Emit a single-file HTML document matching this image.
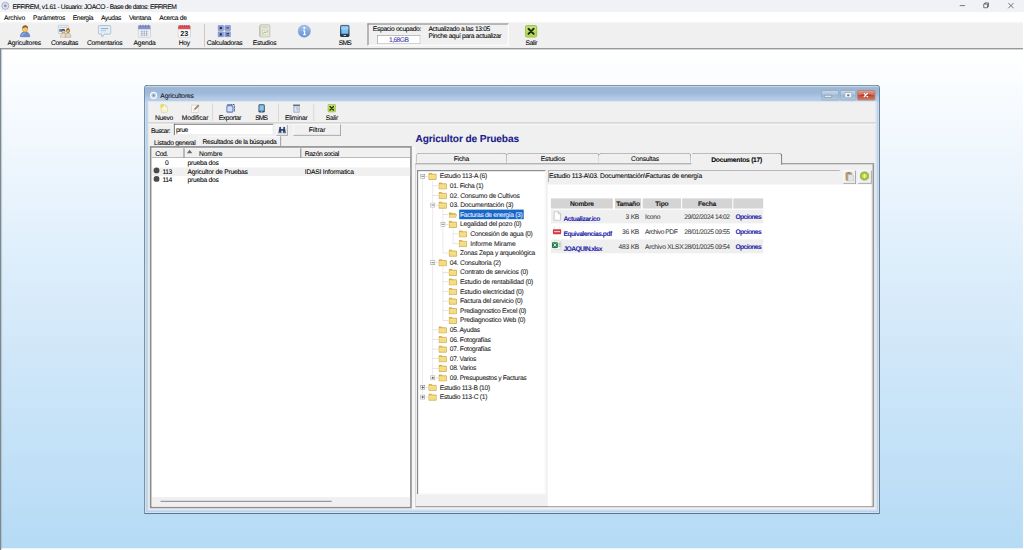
<!DOCTYPE html>
<html lang="es"><head><meta charset="utf-8"><title>EFFIREM</title>
<style>
html,body{margin:0;padding:0;width:1024px;height:550px;overflow:hidden;background:#fff}
#r{position:absolute;left:0;top:0;width:1920px;height:1032px;transform:scale(0.533333);transform-origin:0 0;text-rendering:geometricPrecision;font-family:"Liberation Sans",sans-serif;font-size:12px;overflow:hidden}
#r div,#r span.t,#r svg{position:absolute;box-sizing:border-box}
#r span.t{white-space:nowrap;line-height:16px;height:16px;-webkit-text-stroke:0.12px currentColor}
</style></head><body><div id="r">
<div style="left:0px;top:0px;width:1920px;height:23px;background:#f1f2f5"></div>
<div style="left:0px;top:23px;width:1920px;height:19px;background:#fff"></div>
<div style="left:0px;top:40.5px;width:1918px;height:50px;background:linear-gradient(#f8f8f8 0,#f0f0f0 3.5px)"></div>
<div style="left:0px;top:90px;width:1920px;height:942px;background:#fff"></div>
<div style="left:0px;top:89.8px;width:1918px;height:3.7px;background:linear-gradient(#9c9f9e,#868a89)"></div>
<div style="left:2px;top:93px;width:1916px;height:935px;background:linear-gradient(to bottom,#ffffff 0%,#e4f1fc 35%,#d8ebfa 50%,#cae4f8 70%,#b5dbf5 100%)"></div>
<div style="left:0px;top:90px;width:2px;height:942px;background:#7a8890"></div>
<div style="left:2px;top:92px;width:2px;height:938px;background:#aab4ba;opacity:.6"></div>
<svg style="left:1.7px;top:2.9px" width="16" height="16" viewBox="0 0 16 16"><circle cx="8" cy="8" r="6.6" fill="#e6e8f3" stroke="#a3a7c4" stroke-width="1.7"/><circle cx="8" cy="8" r="4" fill="none" stroke="#c9cce0" stroke-width="1"/><circle cx="8" cy="8" r="2.7" fill="#8d95b8"/></svg>
<span class="t" style="left:23.40px;top:5.00px;font-size:12.60px;letter-spacing:-0.796px;color:#000;">EFFIREM, v1.61 - Usuario: JOACO - Base de datos: EFFIREM</span>
<svg style="left:1780px;top:0" width="140" height="22" viewBox="0 0 140 22"><g stroke="#222" stroke-width="1.1" fill="none"><path d="M19.5 10.5h10"/><path d="M64.5 7.5h7v7h-7z M66.5 7.5v-2h7v7h-2"/><path d="M110.5 5.5l10 10M120.5 5.5l-10 10"/></g></svg>
<span class="t" style="left:7.50px;top:25.62px;font-size:12.60px;letter-spacing:-0.359px;color:#000;">Archivo</span>
<span class="t" style="left:62.00px;top:25.62px;font-size:12.60px;letter-spacing:-0.512px;color:#000;">Parámetros</span>
<span class="t" style="left:136.60px;top:25.62px;font-size:12.60px;letter-spacing:-0.876px;color:#000;">Energía</span>
<span class="t" style="left:189.40px;top:25.62px;font-size:12.60px;letter-spacing:-0.700px;color:#000;">Ayudas</span>
<span class="t" style="left:242.00px;top:25.62px;font-size:12.60px;letter-spacing:-0.750px;color:#000;">Ventana</span>
<span class="t" style="left:298.60px;top:25.62px;font-size:12.60px;letter-spacing:-0.592px;color:#000;">Acerca de</span>
<span class="t" style="left:14.00px;top:72.50px;font-size:12.60px;letter-spacing:-0.302px;color:#000;">Agricultores</span>
<span class="t" style="left:95.60px;top:72.50px;font-size:12.60px;letter-spacing:-0.570px;color:#000;">Consultas</span>
<span class="t" style="left:163.00px;top:72.50px;font-size:12.60px;letter-spacing:-0.430px;color:#000;">Comentarios</span>
<span class="t" style="left:250.50px;top:72.50px;font-size:12.60px;letter-spacing:-0.390px;color:#000;">Agenda</span>
<span class="t" style="left:335.00px;top:72.50px;font-size:12.60px;letter-spacing:-0.469px;color:#000;">Hoy</span>
<span class="t" style="left:387.70px;top:72.50px;font-size:12.60px;letter-spacing:-0.562px;color:#000;">Calculadoras</span>
<span class="t" style="left:474.00px;top:72.50px;font-size:12.60px;letter-spacing:-0.541px;color:#000;">Estudios</span>
<span class="t" style="left:635.00px;top:72.50px;font-size:12.60px;letter-spacing:-1.435px;color:#000;">SMS</span>
<span class="t" style="left:985.50px;top:72.50px;font-size:12.60px;letter-spacing:-0.681px;color:#000;">Salir</span>
<div style="left:383px;top:45px;width:1px;height:43px;background:#a8a8a8"></div>
<div style="left:689px;top:43.5px;width:265px;height:42.5px;border:2.2px solid;border-color:#858585 #fff #fff #858585;background:#f0f0f0"></div>
<span class="t" style="left:699.00px;top:46.25px;font-size:12.60px;letter-spacing:-0.611px;color:#000;">Espacio ocupado:</span>
<div style="left:707px;top:66px;width:81px;height:16px;background:#fff;border:1.5px solid;border-color:#858585 #b0b0b0 #b0b0b0 #858585"></div>
<span class="t" style="left:729.30px;top:66.87px;font-size:12.60px;letter-spacing:-1.055px;color:#3a3aa8;">1,68GB</span>
<span class="t" style="left:803.40px;top:46.25px;font-size:12.60px;letter-spacing:-0.650px;color:#000;">Actualizado a las 13:05</span>
<span class="t" style="left:803.40px;top:59.37px;font-size:12.60px;letter-spacing:-0.596px;color:#000;">Pinche aquí para actualizar</span>
<div style="left:269.8px;top:159.3px;width:1380.4px;height:804.8px;border-radius:7px 7px 2px 2px;background:#b9d1ea;border:2.3px solid;border-top-width:2.6px;border-color:#6f7f8e #6a8298 #4f7290 #7890a6;box-shadow:inset 0 0 0 1.6px rgba(255,255,255,.5)"></div>
<div style="left:272.1px;top:161.9px;width:1375.8px;height:28.9px;border-radius:4px 4px 0 0;background:linear-gradient(to bottom,#b4c5d6 0%,#9bb7d5 10%,#9dbad9 45%,#b1c9e7 74%,#bfcfe1 100%)"></div>
<div style="left:278px;top:190.8px;width:1364px;height:764.2px;background:#f0f0f0"></div>
<div style="left:278px;top:189.6px;width:1364px;height:2.2px;background:#e9eff7"></div>
<div style="left:276.5px;top:190px;width:1.5px;height:767px;background:#dfe9f3"></div>
<div style="left:1642px;top:190px;width:1.5px;height:767px;background:#dfe9f3"></div>
<div style="left:276.5px;top:955px;width:1367px;height:2px;background:#e8eff7"></div>
<svg style="left:279.800px;top:171.300px" width="16" height="16" viewBox="0 0 16 16"><circle cx="8" cy="8" r="5.600" fill="#b7c6da" stroke="#f4f7fb" stroke-width="2.300"/><circle cx="8" cy="8" r="1.900" fill="#7f8ca8"/></svg>
<span class="t" style="left:300.60px;top:171.87px;font-size:12.60px;letter-spacing:-0.319px;color:#10131c;">Agricultores</span>
<div style="left:1540px;top:169px;width:33px;height:19px;border:1px solid #8aa3bd;border-radius:3px;background:linear-gradient(#c9d9ea,#a9c0d9 50%,#9db6d2 50%,#b7cbe0)"></div>
<div style="left:1575px;top:169px;width:30px;height:19px;border:1px solid #8aa3bd;border-radius:3px;background:linear-gradient(#c9d9ea,#a9c0d9 50%,#9db6d2 50%,#b7cbe0)"></div>
<div style="left:1607px;top:169px;width:34px;height:19px;border:1px solid #a8604f;border-radius:3px;background:linear-gradient(#e3a08f,#cf6a55 50%,#c2492f 50%,#d2775f)"></div>
<svg style="left:1540px;top:169px" width="101" height="19" viewBox="0 0 101 19"><rect x="5.500" y="9.500" width="14" height="4" rx="1.500" fill="#eef3f9" stroke="#6f8299" stroke-width="1.200"/><rect x="44" y="4.5" width="13" height="10" rx="1.5" fill="#f3f6fa" stroke="#7b8ea5" stroke-width="1"/><rect x="48.5" y="8" width="4" height="3.5" fill="#5a6f8c"/><path d="M74 9.500h19" stroke="#a8301c" stroke-width="3" opacity=".55"/><path d="M80.300 6l6.400 6.500M86.700 6l-6.400 6.500" stroke="#8a2a1c" stroke-width="4.400" stroke-linecap="round" opacity=".5"/><path d="M80.300 6l6.400 6.500M86.700 6l-6.400 6.500" stroke="#fff" stroke-width="2.600" stroke-linecap="round"/></svg>
<div style="left:278px;top:228.8px;width:1364px;height:3px;background:#d3d3d3"></div>
<div style="left:278px;top:231.8px;width:1364px;height:2.5px;background:#f7f7f7"></div>
<span class="t" style="left:290.60px;top:213.12px;font-size:12.60px;letter-spacing:-0.524px;color:#000;">Nuevo</span>
<span class="t" style="left:340.80px;top:213.12px;font-size:12.60px;letter-spacing:-0.129px;color:#000;">Modificar</span>
<span class="t" style="left:410.00px;top:213.12px;font-size:12.60px;letter-spacing:-0.665px;color:#000;">Exportar</span>
<span class="t" style="left:478.60px;top:213.12px;font-size:12.60px;letter-spacing:-1.701px;color:#000;">SMS</span>
<span class="t" style="left:534.40px;top:213.12px;font-size:12.60px;letter-spacing:-0.414px;color:#000;">Eliminar</span>
<span class="t" style="left:611.00px;top:213.12px;font-size:12.60px;letter-spacing:-0.521px;color:#000;">Salir</span>
<div style="left:398px;top:194px;width:1px;height:33px;background:#c4c4c4"></div>
<div style="left:522px;top:194px;width:1px;height:33px;background:#c4c4c4"></div>
<div style="left:587.5px;top:194px;width:1px;height:33px;background:#c4c4c4"></div>
<span class="t" style="left:283.00px;top:237.50px;font-size:12.60px;letter-spacing:-0.959px;color:#000;">Buscar:</span>
<div style="left:326px;top:232px;width:187px;height:22px;background:#fff;border:2px solid;border-color:#7d7d7d #e8e8e8 #e8e8e8 #7d7d7d"></div>
<span class="t" style="left:329.80px;top:235.62px;font-size:12.60px;letter-spacing:-0.630px;color:#000;">prue</span>
<div style="left:518px;top:234px;width:21px;height:20px;background:#f0f0f0;border:1.5px solid;border-color:#fff #6f6f6f #6f6f6f #fff"></div>
<div style="left:550px;top:233px;width:89px;height:21px;background:#f0f0f0;border:1.5px solid;border-color:#fff #6f6f6f #6f6f6f #fff"></div>
<span class="t" style="left:578.89px;top:235.62px;font-size:12.60px;letter-spacing:-0.138px;color:#000;">Filtrar</span>
<span class="t" style="left:288.75px;top:260.00px;font-size:12.60px;letter-spacing:-0.554px;color:#000;">Listado general</span>
<div style="left:372px;top:255px;width:155px;height:21px;background:#f0f0f0;border:1.5px solid;border-color:#fff #5a5a5a #f0f0f0 #fff"></div>
<span class="t" style="left:379.70px;top:258.12px;font-size:12.60px;letter-spacing:-0.553px;color:#000;">Resultados de la búsqueda</span>
<div style="left:281.3px;top:274.2px;width:491.2px;height:678.8px;background:#fff;border:3.3px solid #8b8b8b"></div>
<div style="left:284.6px;top:277.5px;width:484.6px;height:18px;background:#f0f0f0;border-bottom:1.5px solid #8c8c8c"></div>
<div style="left:344px;top:277.5px;width:1.5px;height:18px;background:#8c8c8c"></div>
<div style="left:563px;top:277.5px;width:1.5px;height:18px;background:#8c8c8c"></div>
<span class="t" style="left:291.00px;top:280.62px;font-size:12.60px;letter-spacing:-0.779px;color:#000;">Cod.</span>
<svg style="left:350px;top:281px" width="11" height="7" viewBox="0 0 11 7"><path d="M0 7L5.5 0L11 7z" fill="#6a6a6a"/></svg>
<span class="t" style="left:373.00px;top:280.62px;font-size:12.60px;letter-spacing:-0.136px;color:#000;">Nombre</span>
<span class="t" style="left:571.40px;top:280.62px;font-size:12.60px;letter-spacing:-0.661px;color:#000;">Razón social</span>
<div style="left:284.6px;top:314px;width:484.6px;height:16px;background:#f0f0f0"></div>
<span class="t" style="left:309.50px;top:297.50px;font-size:12.60px;letter-spacing:0.000px;color:#000;">0</span>
<span class="t" style="left:304.70px;top:314.37px;font-size:12.60px;letter-spacing:-0.929px;color:#000;">113</span>
<span class="t" style="left:304.70px;top:329.37px;font-size:12.60px;letter-spacing:-0.929px;color:#000;">114</span>
<span class="t" style="left:351.60px;top:297.50px;font-size:12.60px;letter-spacing:-0.465px;color:#000;">prueba dos</span>
<span class="t" style="left:351.60px;top:314.37px;font-size:12.60px;letter-spacing:-0.394px;color:#000;">Agricultor de Pruebas</span>
<span class="t" style="left:351.60px;top:329.37px;font-size:12.60px;letter-spacing:-0.465px;color:#000;">prueba dos</span>
<span class="t" style="left:571.40px;top:314.37px;font-size:12.60px;letter-spacing:-0.402px;color:#000;">IDASI Informatica</span>
<div style="left:287.5px;top:313.5px;width:11px;height:11px;background:#4a4a4a;border-radius:50%"></div>
<div style="left:287.5px;top:329.5px;width:11px;height:11px;background:#4a4a4a;border-radius:50%"></div>
<div style="left:284.6px;top:932px;width:484.6px;height:17.7px;background:#f0f0f0"></div>
<div style="left:301px;top:939px;width:321px;height:2px;background:#8d8d8d"></div>
<div style="left:772.5px;top:275px;width:6px;height:678px;background:#f7f7f7"></div>
<span class="t" style="left:779.00px;top:254.03px;font-size:19.00px;letter-spacing:-0.214px;color:#1b1b8a;font-weight:bold;">Agricultor de Pruebas</span>
<div style="left:779px;top:306px;width:859.5px;height:644.5px;background:#f0f0f0;border:2px solid;border-color:#8e8e8e #999 #959595 #c0c0c0;border-right-width:3.3px;border-bottom-width:2.5px;border-left-width:1.3px"></div>
<div style="left:779.5px;top:287px;width:171px;height:20px;background:#f0f0f0;border:1.5px solid;border-color:#7e7e7e #6c6c6c #8c8c8c #a0a0a0;border-radius:7px 7px 0 0"></div>
<span class="t" style="left:850.92px;top:290.00px;font-size:12.60px;letter-spacing:-0.431px;color:#000;">Ficha</span>
<div style="left:949px;top:287px;width:174.5px;height:20px;background:#f0f0f0;border:1.5px solid;border-color:#7e7e7e #6c6c6c #8c8c8c #a0a0a0;border-radius:7px 7px 0 0"></div>
<span class="t" style="left:1014.03px;top:290.00px;font-size:12.60px;letter-spacing:-0.423px;color:#000;">Estudios</span>
<div style="left:1122px;top:287px;width:174px;height:20px;background:#f0f0f0;border:1.5px solid;border-color:#7e7e7e #6c6c6c #8c8c8c #a0a0a0;border-radius:7px 7px 0 0"></div>
<span class="t" style="left:1183.20px;top:290.00px;font-size:12.60px;letter-spacing:-0.436px;color:#000;">Consultas</span>
<div style="left:1296.3px;top:286.5px;width:170.7px;height:23.1px;background:#f0f0f0;border:1.5px solid;border-color:#7e7e7e #5c5c5c #f0f0f0 #fafafa;border-right-width:2.5px;border-radius:7px 7px 0 0"></div>
<span class="t" style="left:1333.60px;top:291.87px;font-size:12.60px;letter-spacing:-0.454px;color:#000;font-weight:bold;">Documentos (17)</span>
<div style="left:781.5px;top:318.5px;width:241.5px;height:608.5px;background:#fff;border:2.1px solid;border-color:#808080 #f6f6f6 #f6f6f6 #808080"></div>
<div style="left:1028px;top:319px;width:547px;height:23px;background:#f0f0f0;border:1.5px solid;border-color:#7f7f7f transparent transparent #7f7f7f"></div>
<span class="t" style="left:1029.40px;top:321.87px;font-size:12.60px;letter-spacing:-0.383px;color:#000;">Estudio 113-A\03. Documentación\Facturas de energía</span>
<div style="left:1580.5px;top:318.5px;width:24.5px;height:25px;background:#f0f0f0;border:1.7px solid;border-color:#fff #6c7078 #6c7078 #fff"></div>
<div style="left:1609px;top:318.5px;width:24.5px;height:25px;background:#f0f0f0;border:1.7px solid;border-color:#fff #6c7078 #6c7078 #fff"></div>
<div style="left:1026.5px;top:346px;width:1607px;height:602.5px;background:#fff;width:606.5px"></div>
<div style="left:792px;top:335px;width:1px;height:409px;background:#dcdae2"></div>
<div style="left:811px;top:339px;width:1px;height:369px;background:#dcdae2"></div>
<div style="left:830px;top:389px;width:1px;height:85px;background:#dcdae2"></div>
<div style="left:849px;top:425px;width:1px;height:31px;background:#dcdae2"></div>
<div style="left:830px;top:497px;width:1px;height:103px;background:#dcdae2"></div>
<div style="left:792px;top:330px;width:11px;height:1px;background:#d2ccd6"></div>
<div style="left:811px;top:348px;width:11px;height:1px;background:#d2ccd6"></div>
<div style="left:811px;top:366px;width:11px;height:1px;background:#d2ccd6"></div>
<div style="left:811px;top:384px;width:11px;height:1px;background:#d2ccd6"></div>
<div style="left:830px;top:402px;width:11px;height:1px;background:#d2ccd6"></div>
<div style="left:830px;top:420px;width:11px;height:1px;background:#d2ccd6"></div>
<div style="left:849px;top:438px;width:11px;height:1px;background:#d2ccd6"></div>
<div style="left:849px;top:456px;width:11px;height:1px;background:#d2ccd6"></div>
<div style="left:830px;top:474px;width:11px;height:1px;background:#d2ccd6"></div>
<div style="left:811px;top:492px;width:11px;height:1px;background:#d2ccd6"></div>
<div style="left:830px;top:510px;width:11px;height:1px;background:#d2ccd6"></div>
<div style="left:830px;top:528px;width:11px;height:1px;background:#d2ccd6"></div>
<div style="left:830px;top:546px;width:11px;height:1px;background:#d2ccd6"></div>
<div style="left:830px;top:564px;width:11px;height:1px;background:#d2ccd6"></div>
<div style="left:830px;top:582px;width:11px;height:1px;background:#d2ccd6"></div>
<div style="left:830px;top:600px;width:11px;height:1px;background:#d2ccd6"></div>
<div style="left:811px;top:618px;width:11px;height:1px;background:#d2ccd6"></div>
<div style="left:811px;top:636px;width:11px;height:1px;background:#d2ccd6"></div>
<div style="left:811px;top:654px;width:11px;height:1px;background:#d2ccd6"></div>
<div style="left:811px;top:672px;width:11px;height:1px;background:#d2ccd6"></div>
<div style="left:811px;top:690px;width:11px;height:1px;background:#d2ccd6"></div>
<div style="left:811px;top:708px;width:11px;height:1px;background:#d2ccd6"></div>
<div style="left:792px;top:726px;width:11px;height:1px;background:#d2ccd6"></div>
<div style="left:792px;top:744px;width:11px;height:1px;background:#d2ccd6"></div>
<svg style="left:787.5px;top:325.5px" width="9" height="9" viewBox="0 0 9 9"><rect x=".5" y=".5" width="8" height="8" fill="#fff" stroke="#757575"/><path d="M2 4.500h5" stroke="#222" stroke-width="1.100"/></svg>
<svg style="left:803px;top:322px" width="16" height="16" viewBox="0 0 16 16"><path d="M1 3h5.400l1.300 1.600H15v9.800H1z" fill="#e3bf4e" stroke="#b8922e" stroke-width="1"/><path d="M1.700 6.400h12.600v7.300H1.700z" fill="#f5dc80"/><path d="M1.700 6.600h12.600" stroke="#fdf2b8" stroke-width="1"/></svg>
<span class="t" style="left:824.50px;top:321.87px;font-size:12.60px;letter-spacing:-0.466px;color:#1a1a1a;">Estudio 113-A (6)</span>
<svg style="left:822px;top:340px" width="16" height="16" viewBox="0 0 16 16"><path d="M1 3h5.400l1.300 1.600H15v9.800H1z" fill="#e3bf4e" stroke="#b8922e" stroke-width="1"/><path d="M1.700 6.400h12.600v7.300H1.700z" fill="#f5dc80"/><path d="M1.700 6.600h12.600" stroke="#fdf2b8" stroke-width="1"/></svg>
<span class="t" style="left:843.50px;top:340.62px;font-size:12.60px;letter-spacing:-0.633px;color:#1a1a1a;">01. Ficha (1)</span>
<svg style="left:822px;top:358px" width="16" height="16" viewBox="0 0 16 16"><path d="M1 3h5.400l1.300 1.600H15v9.800H1z" fill="#e3bf4e" stroke="#b8922e" stroke-width="1"/><path d="M1.700 6.400h12.600v7.300H1.700z" fill="#f5dc80"/><path d="M1.700 6.600h12.600" stroke="#fdf2b8" stroke-width="1"/></svg>
<span class="t" style="left:843.50px;top:359.37px;font-size:12.60px;letter-spacing:-0.425px;color:#1a1a1a;">02. Consumo de Cultivos</span>
<svg style="left:806.5px;top:379.5px" width="9" height="9" viewBox="0 0 9 9"><rect x=".5" y=".5" width="8" height="8" fill="#fff" stroke="#757575"/><path d="M2 4.500h5" stroke="#222" stroke-width="1.100"/></svg>
<svg style="left:822px;top:376px" width="16" height="16" viewBox="0 0 16 16"><path d="M1 3h5.400l1.300 1.600H15v9.800H1z" fill="#e3bf4e" stroke="#b8922e" stroke-width="1"/><path d="M1.700 6.400h12.600v7.300H1.700z" fill="#f5dc80"/><path d="M1.700 6.600h12.600" stroke="#fdf2b8" stroke-width="1"/></svg>
<span class="t" style="left:843.50px;top:376.25px;font-size:12.60px;letter-spacing:-0.413px;color:#1a1a1a;">03. Documentación (3)</span>
<svg style="left:841px;top:394px" width="16" height="16" viewBox="0 0 16 16"><path d="M1 5h4.500l1.200 1.400H13v2H1z" fill="#dcb84c" stroke="#c09a30" stroke-width=".8"/><path d="M2.500 8h13l-2 5.500H.8z" fill="#f6de88" stroke="#c9a53a" stroke-width=".9"/></svg>
<div style="left:860.5px;top:393px;width:121.5px;height:18px;background:#1766c8"></div>
<span class="t" style="left:862.50px;top:395.00px;font-size:12.60px;letter-spacing:-0.638px;color:#e8f1fb;">Facturas de energía (3)</span>
<svg style="left:825.5px;top:415.5px" width="9" height="9" viewBox="0 0 9 9"><rect x=".5" y=".5" width="8" height="8" fill="#fff" stroke="#757575"/><path d="M2 4.500h5" stroke="#222" stroke-width="1.100"/></svg>
<svg style="left:841px;top:412px" width="16" height="16" viewBox="0 0 16 16"><path d="M1 3h5.400l1.300 1.600H15v9.800H1z" fill="#e3bf4e" stroke="#b8922e" stroke-width="1"/><path d="M1.700 6.400h12.600v7.300H1.700z" fill="#f5dc80"/><path d="M1.700 6.600h12.600" stroke="#fdf2b8" stroke-width="1"/></svg>
<span class="t" style="left:862.50px;top:411.87px;font-size:12.60px;letter-spacing:-0.436px;color:#1a1a1a;">Legalidad del pozo (0)</span>
<svg style="left:860px;top:430px" width="16" height="16" viewBox="0 0 16 16"><path d="M1 3h5.400l1.300 1.600H15v9.800H1z" fill="#e3bf4e" stroke="#b8922e" stroke-width="1"/><path d="M1.700 6.400h12.600v7.300H1.700z" fill="#f5dc80"/><path d="M1.700 6.600h12.600" stroke="#fdf2b8" stroke-width="1"/></svg>
<span class="t" style="left:881.50px;top:430.62px;font-size:12.60px;letter-spacing:-0.494px;color:#1a1a1a;">Concesión de agua (0)</span>
<svg style="left:860px;top:448px" width="16" height="16" viewBox="0 0 16 16"><path d="M1 3h5.400l1.300 1.600H15v9.800H1z" fill="#e3bf4e" stroke="#b8922e" stroke-width="1"/><path d="M1.700 6.400h12.600v7.300H1.700z" fill="#f5dc80"/><path d="M1.700 6.600h12.600" stroke="#fdf2b8" stroke-width="1"/></svg>
<span class="t" style="left:881.50px;top:449.37px;font-size:12.60px;letter-spacing:-0.194px;color:#1a1a1a;">Informe Mirame</span>
<svg style="left:841px;top:466px" width="16" height="16" viewBox="0 0 16 16"><path d="M1 3h5.400l1.300 1.600H15v9.800H1z" fill="#e3bf4e" stroke="#b8922e" stroke-width="1"/><path d="M1.700 6.400h12.600v7.300H1.700z" fill="#f5dc80"/><path d="M1.700 6.600h12.600" stroke="#fdf2b8" stroke-width="1"/></svg>
<span class="t" style="left:862.50px;top:466.25px;font-size:12.60px;letter-spacing:-0.476px;color:#1a1a1a;">Zonas Zepa y arqueológica</span>
<svg style="left:806.5px;top:487.5px" width="9" height="9" viewBox="0 0 9 9"><rect x=".5" y=".5" width="8" height="8" fill="#fff" stroke="#757575"/><path d="M2 4.500h5" stroke="#222" stroke-width="1.100"/></svg>
<svg style="left:822px;top:484px" width="16" height="16" viewBox="0 0 16 16"><path d="M1 3h5.400l1.300 1.600H15v9.800H1z" fill="#e3bf4e" stroke="#b8922e" stroke-width="1"/><path d="M1.700 6.400h12.600v7.300H1.700z" fill="#f5dc80"/><path d="M1.700 6.600h12.600" stroke="#fdf2b8" stroke-width="1"/></svg>
<span class="t" style="left:843.50px;top:485.00px;font-size:12.60px;letter-spacing:-0.482px;color:#1a1a1a;">04. Consultoría (2)</span>
<svg style="left:841px;top:502px" width="16" height="16" viewBox="0 0 16 16"><path d="M1 3h5.400l1.300 1.600H15v9.800H1z" fill="#e3bf4e" stroke="#b8922e" stroke-width="1"/><path d="M1.700 6.400h12.600v7.300H1.700z" fill="#f5dc80"/><path d="M1.700 6.600h12.600" stroke="#fdf2b8" stroke-width="1"/></svg>
<span class="t" style="left:862.50px;top:501.87px;font-size:12.60px;letter-spacing:-0.390px;color:#1a1a1a;">Contrato de servicios (0)</span>
<svg style="left:841px;top:520px" width="16" height="16" viewBox="0 0 16 16"><path d="M1 3h5.400l1.300 1.600H15v9.800H1z" fill="#e3bf4e" stroke="#b8922e" stroke-width="1"/><path d="M1.700 6.400h12.600v7.300H1.700z" fill="#f5dc80"/><path d="M1.700 6.600h12.600" stroke="#fdf2b8" stroke-width="1"/></svg>
<span class="t" style="left:862.50px;top:520.62px;font-size:12.60px;letter-spacing:-0.366px;color:#1a1a1a;">Estudio de rentabilidad (0)</span>
<svg style="left:841px;top:538px" width="16" height="16" viewBox="0 0 16 16"><path d="M1 3h5.400l1.300 1.600H15v9.800H1z" fill="#e3bf4e" stroke="#b8922e" stroke-width="1"/><path d="M1.700 6.400h12.600v7.300H1.700z" fill="#f5dc80"/><path d="M1.700 6.600h12.600" stroke="#fdf2b8" stroke-width="1"/></svg>
<span class="t" style="left:862.50px;top:539.37px;font-size:12.60px;letter-spacing:-0.371px;color:#1a1a1a;">Estudio electricidad (0)</span>
<svg style="left:841px;top:556px" width="16" height="16" viewBox="0 0 16 16"><path d="M1 3h5.400l1.300 1.600H15v9.800H1z" fill="#e3bf4e" stroke="#b8922e" stroke-width="1"/><path d="M1.700 6.400h12.600v7.300H1.700z" fill="#f5dc80"/><path d="M1.700 6.600h12.600" stroke="#fdf2b8" stroke-width="1"/></svg>
<span class="t" style="left:862.50px;top:556.25px;font-size:12.60px;letter-spacing:-0.456px;color:#1a1a1a;">Factura del servicio (0)</span>
<svg style="left:841px;top:574px" width="16" height="16" viewBox="0 0 16 16"><path d="M1 3h5.400l1.300 1.600H15v9.800H1z" fill="#e3bf4e" stroke="#b8922e" stroke-width="1"/><path d="M1.700 6.400h12.600v7.300H1.700z" fill="#f5dc80"/><path d="M1.700 6.600h12.600" stroke="#fdf2b8" stroke-width="1"/></svg>
<span class="t" style="left:862.50px;top:575.00px;font-size:12.60px;letter-spacing:-0.528px;color:#1a1a1a;">Prediagnostico Excel (0)</span>
<svg style="left:841px;top:592px" width="16" height="16" viewBox="0 0 16 16"><path d="M1 3h5.400l1.300 1.600H15v9.800H1z" fill="#e3bf4e" stroke="#b8922e" stroke-width="1"/><path d="M1.700 6.400h12.600v7.300H1.700z" fill="#f5dc80"/><path d="M1.700 6.600h12.600" stroke="#fdf2b8" stroke-width="1"/></svg>
<span class="t" style="left:862.50px;top:591.87px;font-size:12.60px;letter-spacing:-0.415px;color:#1a1a1a;">Prediagnostico Web (0)</span>
<svg style="left:822px;top:610px" width="16" height="16" viewBox="0 0 16 16"><path d="M1 3h5.400l1.300 1.600H15v9.800H1z" fill="#e3bf4e" stroke="#b8922e" stroke-width="1"/><path d="M1.700 6.400h12.600v7.300H1.700z" fill="#f5dc80"/><path d="M1.700 6.600h12.600" stroke="#fdf2b8" stroke-width="1"/></svg>
<span class="t" style="left:843.50px;top:610.62px;font-size:12.60px;letter-spacing:-0.592px;color:#1a1a1a;">05. Ayudas</span>
<svg style="left:822px;top:628px" width="16" height="16" viewBox="0 0 16 16"><path d="M1 3h5.400l1.300 1.600H15v9.800H1z" fill="#e3bf4e" stroke="#b8922e" stroke-width="1"/><path d="M1.700 6.400h12.600v7.300H1.700z" fill="#f5dc80"/><path d="M1.700 6.600h12.600" stroke="#fdf2b8" stroke-width="1"/></svg>
<span class="t" style="left:843.50px;top:629.37px;font-size:12.60px;letter-spacing:-0.570px;color:#1a1a1a;">06. Fotografías</span>
<svg style="left:822px;top:646px" width="16" height="16" viewBox="0 0 16 16"><path d="M1 3h5.400l1.300 1.600H15v9.800H1z" fill="#e3bf4e" stroke="#b8922e" stroke-width="1"/><path d="M1.700 6.400h12.600v7.300H1.700z" fill="#f5dc80"/><path d="M1.700 6.600h12.600" stroke="#fdf2b8" stroke-width="1"/></svg>
<span class="t" style="left:843.50px;top:646.25px;font-size:12.60px;letter-spacing:-0.570px;color:#1a1a1a;">07. Fotografías</span>
<svg style="left:822px;top:664px" width="16" height="16" viewBox="0 0 16 16"><path d="M1 3h5.400l1.300 1.600H15v9.800H1z" fill="#e3bf4e" stroke="#b8922e" stroke-width="1"/><path d="M1.700 6.400h12.600v7.300H1.700z" fill="#f5dc80"/><path d="M1.700 6.600h12.600" stroke="#fdf2b8" stroke-width="1"/></svg>
<span class="t" style="left:843.50px;top:665.00px;font-size:12.60px;letter-spacing:-0.680px;color:#1a1a1a;">07. Varios</span>
<svg style="left:822px;top:682px" width="16" height="16" viewBox="0 0 16 16"><path d="M1 3h5.400l1.300 1.600H15v9.800H1z" fill="#e3bf4e" stroke="#b8922e" stroke-width="1"/><path d="M1.700 6.400h12.600v7.300H1.700z" fill="#f5dc80"/><path d="M1.700 6.600h12.600" stroke="#fdf2b8" stroke-width="1"/></svg>
<span class="t" style="left:843.50px;top:681.87px;font-size:12.60px;letter-spacing:-0.680px;color:#1a1a1a;">08. Varios</span>
<svg style="left:806.5px;top:703.5px" width="9" height="9" viewBox="0 0 9 9"><rect x=".5" y=".5" width="8" height="8" fill="#fff" stroke="#757575"/><path d="M2 4.500h5M4.5 2v5" stroke="#222" stroke-width="1.100"/></svg>
<svg style="left:822px;top:700px" width="16" height="16" viewBox="0 0 16 16"><path d="M1 3h5.400l1.300 1.600H15v9.800H1z" fill="#e3bf4e" stroke="#b8922e" stroke-width="1"/><path d="M1.700 6.400h12.600v7.300H1.700z" fill="#f5dc80"/><path d="M1.700 6.600h12.600" stroke="#fdf2b8" stroke-width="1"/></svg>
<span class="t" style="left:843.50px;top:700.62px;font-size:12.60px;letter-spacing:-0.629px;color:#1a1a1a;">09. Presupuestos y Facturas</span>
<svg style="left:787.5px;top:721.5px" width="9" height="9" viewBox="0 0 9 9"><rect x=".5" y=".5" width="8" height="8" fill="#fff" stroke="#757575"/><path d="M2 4.500h5M4.5 2v5" stroke="#222" stroke-width="1.100"/></svg>
<svg style="left:803px;top:718px" width="16" height="16" viewBox="0 0 16 16"><path d="M1 3h5.400l1.300 1.600H15v9.800H1z" fill="#e3bf4e" stroke="#b8922e" stroke-width="1"/><path d="M1.700 6.400h12.600v7.300H1.700z" fill="#f5dc80"/><path d="M1.700 6.600h12.600" stroke="#fdf2b8" stroke-width="1"/></svg>
<span class="t" style="left:824.50px;top:719.37px;font-size:12.60px;letter-spacing:-0.551px;color:#1a1a1a;">Estudio 113-B (10)</span>
<svg style="left:787.5px;top:739.5px" width="9" height="9" viewBox="0 0 9 9"><rect x=".5" y=".5" width="8" height="8" fill="#fff" stroke="#757575"/><path d="M2 4.500h5M4.5 2v5" stroke="#222" stroke-width="1.100"/></svg>
<svg style="left:803px;top:736px" width="16" height="16" viewBox="0 0 16 16"><path d="M1 3h5.400l1.300 1.600H15v9.800H1z" fill="#e3bf4e" stroke="#b8922e" stroke-width="1"/><path d="M1.700 6.400h12.600v7.300H1.700z" fill="#f5dc80"/><path d="M1.700 6.600h12.600" stroke="#fdf2b8" stroke-width="1"/></svg>
<span class="t" style="left:824.50px;top:736.25px;font-size:12.60px;letter-spacing:-0.512px;color:#1a1a1a;">Estudio 113-C (1)</span>
<div style="left:1033px;top:371.5px;width:116px;height:19px;background:#d4d4d4"></div>
<span class="t" style="left:1068.86px;top:374.37px;font-size:12.60px;letter-spacing:-0.555px;color:#1a1a1a;font-weight:bold;">Nombre</span>
<div style="left:1153px;top:371.5px;width:49px;height:19px;background:#d4d4d4"></div>
<span class="t" style="left:1155.47px;top:374.37px;font-size:12.60px;letter-spacing:-0.553px;color:#1a1a1a;font-weight:bold;">Tamaño</span>
<div style="left:1205px;top:371.5px;width:72px;height:19px;background:#d4d4d4"></div>
<span class="t" style="left:1228.74px;top:374.37px;font-size:12.60px;letter-spacing:-0.461px;color:#1a1a1a;font-weight:bold;">Tipo</span>
<div style="left:1279px;top:371.5px;width:93.5px;height:19px;background:#d4d4d4"></div>
<span class="t" style="left:1308.82px;top:374.37px;font-size:12.60px;letter-spacing:-0.510px;color:#1a1a1a;font-weight:bold;">Fecha</span>
<div style="left:1374.5px;top:371.5px;width:56.5px;height:19px;background:#d4d4d4"></div>
<div style="left:1033px;top:393.2px;width:398px;height:26px;background:#efefef"></div>
<span class="t" style="left:1056.50px;top:402.50px;font-size:12.60px;letter-spacing:-0.909px;color:#1f1fa8;font-weight:bold;">Actualizar.ico</span>
<span class="t" style="left:1172.90px;top:398.75px;font-size:12.60px;letter-spacing:-0.478px;color:#444;">3 KB</span>
<span class="t" style="left:1209.40px;top:398.75px;font-size:12.60px;letter-spacing:-0.432px;color:#444;">Icono</span>
<span class="t" style="left:1283.00px;top:398.75px;font-size:12.60px;letter-spacing:-0.818px;color:#444;">29/02/2024 14:02</span>
<span class="t" style="left:1379.00px;top:398.75px;font-size:12.60px;letter-spacing:-1.177px;color:#1f1fa8;font-weight:bold;">Opciones</span>
<span class="t" style="left:1056.50px;top:430.62px;font-size:12.60px;letter-spacing:-0.978px;color:#1f1fa8;font-weight:bold;">Equivalencias.pdf</span>
<span class="t" style="left:1166.38px;top:426.87px;font-size:12.60px;letter-spacing:-0.481px;color:#444;">36 KB</span>
<span class="t" style="left:1209.40px;top:426.87px;font-size:12.60px;letter-spacing:-0.920px;color:#444;">Archivo PDF</span>
<span class="t" style="left:1283.00px;top:426.87px;font-size:12.60px;letter-spacing:-0.818px;color:#444;">28/01/2025 09:55</span>
<span class="t" style="left:1379.00px;top:426.87px;font-size:12.60px;letter-spacing:-1.177px;color:#1f1fa8;font-weight:bold;">Opciones</span>
<div style="left:1033px;top:448.7px;width:398px;height:26px;background:#efefef"></div>
<span class="t" style="left:1056.50px;top:458.75px;font-size:12.60px;letter-spacing:-1.119px;color:#1f1fa8;font-weight:bold;">JOAQUIN.xlsx</span>
<span class="t" style="left:1159.86px;top:455.00px;font-size:12.60px;letter-spacing:-0.482px;color:#444;">483 KB</span>
<span class="t" style="left:1209.40px;top:455.00px;font-size:12.60px;letter-spacing:-0.453px;color:#444;">Archivo XLSX</span>
<span class="t" style="left:1283.00px;top:455.00px;font-size:12.60px;letter-spacing:-0.818px;color:#444;">28/01/2025 09:54</span>
<span class="t" style="left:1379.00px;top:455.00px;font-size:12.60px;letter-spacing:-1.177px;color:#1f1fa8;font-weight:bold;">Opciones</span>
<svg style="left:1037px;top:396px" width="16" height="18" viewBox="0 0 16 18"><path d="M2 1h8l4 4v12H2z" fill="#fff" stroke="#9aa0a8" stroke-width="1"/><path d="M10 1v4h4" fill="#eef0f3" stroke="#9aa0a8" stroke-width="1"/></svg>
<svg style="left:1036px;top:424.75px" width="17" height="16" viewBox="0 0 17 16"><path d="M3 0h8l3 3v4H3z" fill="#fff" stroke="#d8b0b0" stroke-width=".8"/><rect x=".5" y="5" width="16" height="9" rx="2" fill="#d23a3f"/><rect x="3" y="8" width="11" height="2.4" fill="#f4c4c4"/></svg>
<svg style="left:1035px;top:450.5px" width="18" height="17" viewBox="0 0 18 17"><path d="M5 .5h9l3 3v13H5z" fill="#fff" stroke="#9fb8a6" stroke-width="1"/><path d="M12 5h4M12 8h4M12 11h4" stroke="#3f8f5f" stroke-width="1.2"/><rect x="0" y="3" width="11" height="11" rx="1.5" fill="#1f7a45"/><path d="M3 5.5l5 6M8 5.5l-5 6" stroke="#fff" stroke-width="1.6"/></svg>
<svg style="left:35px;top:46px" width="24" height="24" viewBox="0 0 24 24"><path d="M3 23c0-6 3.5-9.5 9-9.5s9 3.5 9 9.5c-3 1.4-15 1.4-18 0z" fill="#6f8fcf" stroke="#4a68a8" stroke-width=".8"/><path d="M6 22c1-4 3-6 6-6.5" stroke="#a8bde8" stroke-width="1.6" fill="none"/><circle cx="12" cy="9" r="5" fill="#f3c866" stroke="#b98a2e" stroke-width=".8"/><path d="M6.6 8.5c-.6-5 2.4-7.3 5.6-7.3 3.4 0 6 2.400 5.300 7-1-2.200-2.800-3.400-5.400-3.300-2.200.1-4.200 1.300-5.500 3.600z" fill="#8a5a1e"/></svg>
<svg style="left:108px;top:46px" width="26" height="25" viewBox="0 0 26 25"><rect x="1" y="1.500" width="19" height="15" rx="1.500" fill="#fafbfd" stroke="#a8adb8" stroke-width="1.200"/><rect x="3" y="4" width="15" height="3" fill="#c9d0dc"/><rect x="3" y="8.500" width="8" height="5" fill="#5a7fa8"/><circle cx="11" cy="13" r="3" fill="#e8d0a8" stroke="#6a5a4a" stroke-width=".9"/><path d="M7.800 12.500c0-3 1.500-4 3.200-4s3.200 1 3.200 4c-1-1.500-5.400-1.500-6.400 0z" fill="#3c444e"/><circle cx="19.500" cy="12" r="3.200" fill="#e0b878" stroke="#7a5520" stroke-width=".9"/><path d="M16.100 11.500c0-3.200 1.600-4.300 3.400-4.300s3.400 1.100 3.400 4.300c-1.200-1.600-5.600-1.600-6.800 0z" fill="#9a6a24"/><path d="M5.500 24c0-5 2.500-7.500 5.500-7.500s5.500 2.500 5.500 7.500z" fill="#efe2c8" stroke="#a89878" stroke-width=".9"/><path d="M14 24c0-5.500 2.500-8 5.500-8s5.500 2.500 5.500 8z" fill="#e8d8b4" stroke="#9a8460" stroke-width=".9"/></svg>
<svg style="left:183px;top:47px" width="26" height="24" viewBox="0 0 26 24"><path d="M4 1h18a3 3 0 0 1 3 3v10a3 3 0 0 1-3 3H13l-4.500 5.500L7.500 17H4a3 3 0 0 1-3-3V4a3 3 0 0 1 3-3z" fill="#e4eef8" stroke="#93a7bd" stroke-width="1.300"/><path d="M6 6.500h14" stroke="#7fa4cf" stroke-width="1.600"/><path d="M6 10h10" stroke="#a9c3e0" stroke-width="1.600"/><path d="M6 13h8" stroke="#c4d6ea" stroke-width="1.300"/></svg>
<svg style="left:258px;top:46px" width="25" height="25" viewBox="0 0 25 25"><rect x="1" y="2" width="23" height="22" rx="1.500" fill="#f5f6fa" stroke="#a9aec4" stroke-width="1"/><rect x="1" y="2" width="23" height="7" fill="#8794cc"/><path d="M5 0v5M10 0v5M15 0v5M20 0v5" stroke="#5a66a8" stroke-width="1.400"/><path d="M4 13h17M4 16.500h17M4 20h17" stroke="#b7bccb" stroke-width="1"/><path d="M8 11v11M12.500 11v11M17 11v11" stroke="#8f94a8" stroke-width="1.300"/></svg>
<svg style="left:333px;top:47px" width="25" height="24" viewBox="0 0 25 24"><rect x="1" y="1" width="23" height="22" rx="2" fill="#fdfdfd" stroke="#b4b4b4" stroke-width="1"/><path d="M1 3a2 2 0 0 1 2-2h19a2 2 0 0 1 2 2v5H1z" fill="#d9545b"/><path d="M5 0v4M9 0v4M13 0v4M17 0v4M21 0v4" stroke="#a83038" stroke-width="1.200"/><text x="12.500" y="20.500" font-family="Liberation Sans,sans-serif" font-weight="bold" font-size="13.500" text-anchor="middle" fill="#222">23</text></svg>
<svg style="left:408px;top:47px" width="25" height="23" viewBox="0 0 25 23"><g fill="#8fa2d6" stroke="#7388c2" stroke-width=".8"><rect x=".5" y=".5" width="11" height="10" rx="1.500"/><rect x="13.500" y=".5" width="11" height="10" rx="1.500"/><rect x=".5" y="12.500" width="11" height="10" rx="1.500"/><rect x="13.500" y="12.500" width="11" height="10" rx="1.500"/></g><g fill="#1d2a55"><rect x="4" y="3.500" width="4" height="4"/><rect x="16.500" y="4.500" width="5" height="1.600"/><rect x="4" y="15.500" width="4" height="4"/><rect x="16.500" y="15" width="5" height="1.500"/><rect x="16.500" y="18" width="5" height="1.500"/></g></svg>
<svg style="left:485px;top:45px" width="23" height="26" viewBox="0 0 23 26"><rect x="2" y="1.500" width="19" height="23" rx="2" fill="#e2e5d8" stroke="#b4baa4" stroke-width="1.400"/><path d="M1 5h3M1 9h3M1 13h3M1 17h3M1 21h3" stroke="#9aa08a" stroke-width="1.200"/><path d="M7 6h10" stroke="#c0c6b0" stroke-width="1.500"/><rect x="7" y="12" width="10" height="8" fill="#f4f7ea" stroke="#b9c0a4" stroke-width=".8"/><path d="M8.500 18l2.500-3 2 1.500 3-3" stroke="#6a9a3a" stroke-width="1.400" fill="none"/></svg>
<svg style="left:557.5px;top:45.5px" width="25" height="25" viewBox="0 0 25 25"><defs><linearGradient id="ig" x1="0" y1="0" x2="0" y2="1"><stop offset="0" stop-color="#a9c6ec"/><stop offset="1" stop-color="#5f8fd0"/></linearGradient></defs><circle cx="12.500" cy="12.500" r="11.600" fill="url(#ig)" stroke="#86a8da" stroke-width="1"/><circle cx="12.500" cy="6.800" r="2" fill="#fff"/><path d="M10 10.500h4.200v7.500h1.800v2h-6v-2h1.800v-5.500H10z" fill="#fff"/></svg>
<svg style="left:636.5px;top:46px" width="19" height="24" viewBox="0 0 19 24"><defs><linearGradient id="pg" x1="0" y1="0" x2="0" y2="1"><stop offset="0" stop-color="#4f7396"/><stop offset="1" stop-color="#1f3348"/></linearGradient></defs><rect x=".5" y=".5" width="18" height="23" rx="3.500" fill="url(#pg)"/><rect x="3" y="3.500" width="13" height="14" rx="1" fill="#7cc0f2"/><rect x="3" y="3.500" width="13" height="6" fill="#9bd0f6"/><rect x="7" y="19.500" width="5" height="1.800" rx=".9" fill="#c8d4e0"/></svg>
<svg style="left:984px;top:47px" width="23.5" height="23.5" viewBox="0 0 24 24"><rect x=".8" y=".8" width="22.400" height="22.400" rx="4" fill="#b9d65c" stroke="#93b53a" stroke-width="1.500"/><rect x="2.500" y="2.500" width="19" height="9" rx="3" fill="#cfe585" opacity=".7"/><path d="M7 7l10 10M17 7L7 17" stroke="#16300e" stroke-width="3.600" stroke-linecap="round"/></svg>
<svg style="left:299.5px;top:194px" width="16" height="18" viewBox="0 0 16 18"><defs><linearGradient id="ng" x1="0" y1="0" x2="0" y2="1"><stop offset="0" stop-color="#ffffff"/><stop offset="1" stop-color="#f7f3c0"/></linearGradient></defs><path d="M2.500 2.500h7.500l3.500 3.500v10.500h-11z" fill="url(#ng)" stroke="#c4c4b0" stroke-width="1"/><path d="M10 2.500v3.500h3.500" fill="#efecc8" stroke="#c8c49a" stroke-width=".8"/><path d="M4 0l1.200 2.600 2.800.4-2 2 .5 2.800L4 6.500 1.500 7.800 2 5 0 3l2.800-.4z" fill="#f0e04a" stroke="#d8c42a" stroke-width=".4"/><rect x="3" y="11" width="10" height="5" fill="#f6f2b8" opacity=".8"/></svg>
<svg style="left:358px;top:195px" width="17" height="17" viewBox="0 0 17 17"><rect x="1" y="2" width="13" height="14" rx="1" fill="#fbf7f3" stroke="#c9c1b8" stroke-width="1"/><path d="M5.500 11.500l.8-2.800 7.200-7.200 2 2-7.200 7.200z" fill="#9f8660" stroke="#7a6444" stroke-width=".5"/><path d="M5.500 11.500l.8-2.800 2 2z" fill="#e8d8b8"/></svg>
<svg style="left:423.5px;top:195px" width="17" height="17" viewBox="0 0 17 17"><rect x="1.200" y="3.200" width="11.600" height="12" rx="2" fill="#d3dff7" stroke="#5c80c9" stroke-width="2.200"/><path d="M2.500 1h2.200M6 1h2.200M9.500 1h2.200M13 1h2.500M14.800 4h2M14.800 7h2M14.800 10h2M14.800 13h2" stroke="#33426e" stroke-width="1.800"/></svg>
<svg style="left:484px;top:195px" width="13" height="16.5" viewBox="0 0 13 16.5"><rect x=".5" y=".5" width="12" height="15.500" rx="2.600" fill="#34506e"/><rect x="2.300" y="2.500" width="8.400" height="10" rx=".8" fill="#86c4f0"/><rect x="5" y="13.600" width="3" height="1.200" fill="#b8c8d8"/></svg>
<svg style="left:549px;top:195px" width="14" height="17" viewBox="0 0 14 17"><rect x="1.500" y="3" width="11" height="13" rx="1" fill="#c3cfe2" stroke="#9aa8c0" stroke-width="1"/><rect x=".5" y="1" width="13" height="2.600" fill="#5f6878"/><rect x="4" y="6" width="6" height="7" fill="#dfe6f2"/><path d="M6 7.500h2.500v4.500" stroke="#8a98b0" stroke-width="1.200" fill="none"/></svg>
<svg style="left:613.5px;top:195px" width="16" height="16" viewBox="0 0 24 24"><rect x=".8" y=".8" width="22.400" height="22.400" rx="4" fill="#b9d65c" stroke="#93b53a" stroke-width="1.500"/><rect x="2.500" y="2.500" width="19" height="9" rx="3" fill="#cfe585" opacity=".7"/><path d="M7 7l10 10M17 7L7 17" stroke="#16300e" stroke-width="3.600" stroke-linecap="round"/></svg>
<svg style="left:521px;top:237px" width="16" height="14" viewBox="0 0 16 14"><g fill="#263a68"><path d="M1 13l1.500-9h3.500l.8 9z"/><path d="M9.200 13l.8-9h3.500l1.500 9z"/><rect x="2.800" y="1" width="3" height="3.500"/><rect x="10.200" y="1" width="3" height="3.500"/><rect x="6" y="5" width="4" height="3"/></g><path d="M2.300 11h3.200M10.500 11h3.200" stroke="#9fb4e0" stroke-width="1.400"/></svg>
<svg style="left:1584.5px;top:321.5px" width="17" height="18" viewBox="0 0 17 18"><rect x="1" y="2" width="11" height="14" rx="1" fill="#c4a06c" stroke="#9a7a4c" stroke-width="1"/><rect x="4" y=".5" width="5" height="3" fill="#8a8a8a"/><path d="M5 5h7.500l3.500 3.500v9H5z" fill="#e4e6e4" stroke="#a4a8a8" stroke-width=".9"/></svg>
<svg style="left:1611.8px;top:320.5px" width="18" height="18" viewBox="0 0 18 18"><circle cx="9" cy="9" r="8.200" fill="#a2c043" stroke="#8aa836" stroke-width="1.200"/><circle cx="9" cy="9" r="4.500" fill="#cde65e" opacity=".75"/><path d="M9 5.500v7M5.500 9h7" stroke="#eef9a8" stroke-width="1.800"/></svg>
</div></body></html>
